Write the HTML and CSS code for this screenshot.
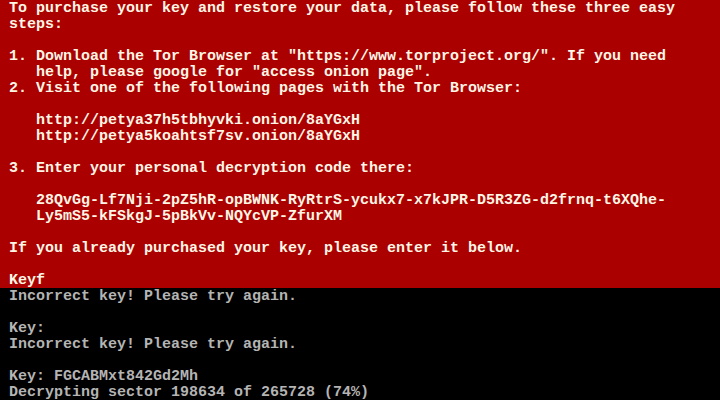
FILE: index.html
```html
<!DOCTYPE html>
<html lang="en">
<head>
    <meta charset="UTF-8">
    <meta name="viewport" content="width=device-width, initial-scale=1.0">
    <title>Petya</title>
    <link rel="stylesheet" href="styles.css">
</head>
<body>
    <div class="screen">
        <pre class="ransom">To purchase your key and restore your data, please follow these three easy
steps:

1. Download the Tor Browser at "https://www.torproject.org/". If you need
   help, please google for "access onion page".
2. Visit one of the following pages with the Tor Browser:

   http://petya37h5tbhyvki.onion/8aYGxH
   http://petya5koahtsf7sv.onion/8aYGxH

3. Enter your personal decryption code there:

   28QvGg-Lf7Nji-2pZ5hR-opBWNK-RyRtrS-ycukx7-x7kJPR-D5R3ZG-d2frnq-t6XQhe-
   Ly5mS5-kFSkgJ-5pBkVv-NQYcVP-ZfurXM

If you already purchased your key, please enter it below.

Keyf</pre>
        <pre class="console">Incorrect key! Please try again.

Key:
Incorrect key! Please try again.

Key: FGCABMxt842Gd2Mh
Decrypting sector 198634 of 265728 (74%)</pre>
    </div>
</body>
</html>
```

FILE: styles.css
```css
body {
    margin: 0;
    background-color: #000;
}
.screen {
    width: 720px;
    height: 400px;
    overflow: hidden;
    display: flex;
    flex-direction: column;
}
.screen pre {
    box-sizing: border-box;
    margin: 0;
    padding: 1px 0 0 9px;
    font-family: "Liberation Mono", "DejaVu Sans Mono", monospace;
    font-size: 15px;
    font-weight: bold;
    line-height: 16px;
    white-space: pre;
}
.ransom {
    flex: 0 0 288px;
    height: 288px;
    background-color: #aa0000;
    color: #fff6e6;
}
.console {
    flex: 1;
    background-color: #000;
    color: #b4b4b4;
}
```
